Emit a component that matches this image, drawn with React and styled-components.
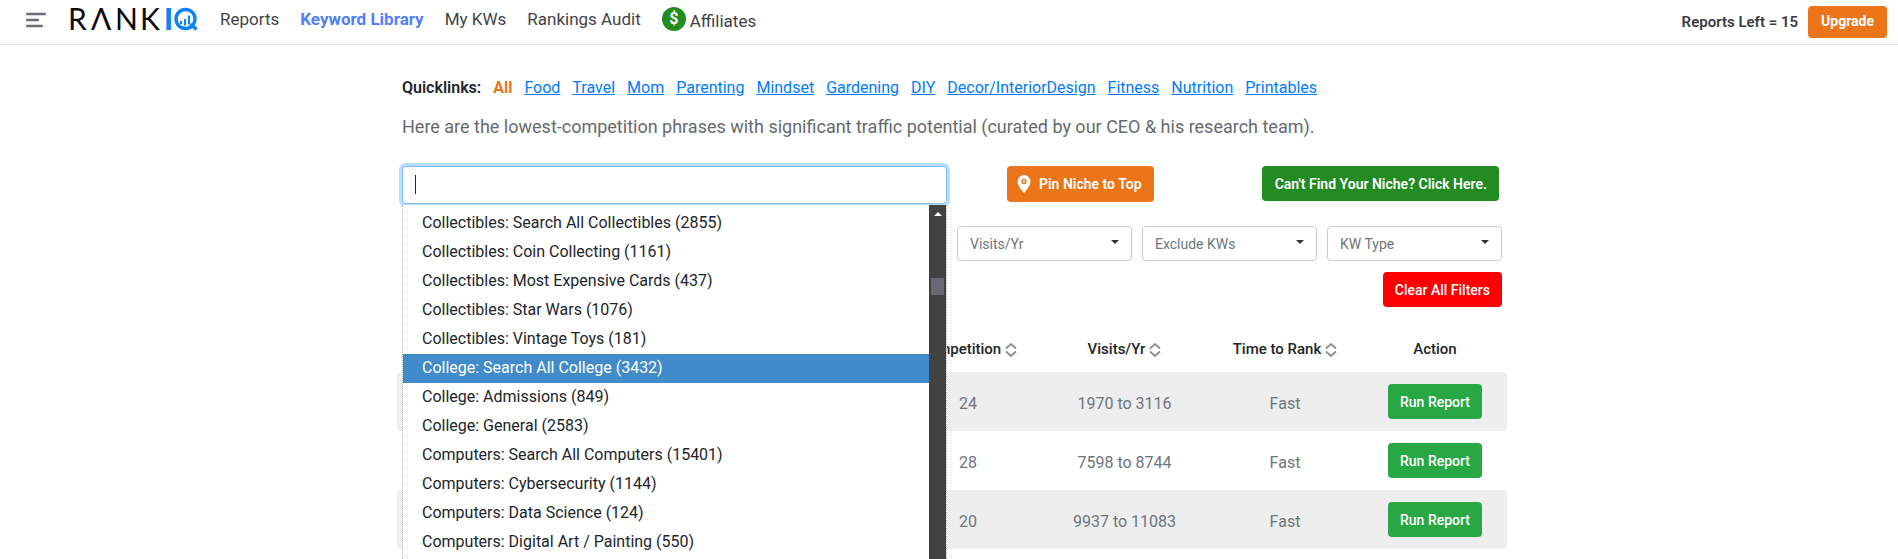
import React from 'react'
import styled, { createGlobalStyle } from 'styled-components'

//Data
const navLinks = [
  { label: 'Reports' },
  { label: 'Keyword Library', active: true },
  { label: 'My KWs' },
  { label: 'Rankings Audit' },
]

const quicklinks = [
  'Food',
  'Travel',
  'Mom',
  'Parenting',
  'Mindset',
  'Gardening',
  'DIY',
  'Decor/InteriorDesign',
  'Fitness',
  'Nutrition',
  'Printables',
]

const niches = [
  'Collectibles: Search All Collectibles (2855)',
  'Collectibles: Coin Collecting (1161)',
  'Collectibles: Most Expensive Cards (437)',
  'Collectibles: Star Wars (1076)',
  'Collectibles: Vintage Toys (181)',
  'College: Search All College (3432)',
  'College: Admissions (849)',
  'College: General (2583)',
  'Computers: Search All Computers (15401)',
  'Computers: Cybersecurity (1144)',
  'Computers: Data Science (124)',
  'Computers: Digital Art / Painting (550)',
]
const activeNiche = 5

const filters = ['Visits/Yr', 'Exclude KWs', 'KW Type']

const rows = [
  { competition: 24, visits: '1970 to 3116', time: 'Fast' },
  { competition: 28, visits: '7598 to 8744', time: 'Fast' },
  { competition: 20, visits: '9937 to 11083', time: 'Fast' },
]

//Icons
const MenuIcon = () => (
  <svg width='20' height='16' viewBox='0 0 20 16' fill='none' stroke='#6e6b7b' strokeWidth='2.4' strokeLinecap='round'>
    <path d='M1.200 2h17.600M1.200 8h10.600M1.200 14h14.600' />
  </svg>
)

const Logo = () => (
  <svg width='134' height='38' viewBox='-4 -7 134 38' role='img' aria-label='RankIQ'>
    <text y='23' x='-2 21 45 70' fontFamily='Lato, sans-serif' fontSize='30' fill='#0b0b0b'>
      RΛNK
    </text>
    <text y='23' x='94' fontFamily='Lato, sans-serif' fontWeight='900' fontSize='30' fill='#0d84f5'>
      I
    </text>
    <circle cx='115.500' cy='12' r='9.500' fill='none' stroke='#0d84f5' strokeWidth='3.400' />
    <path d='M111 17v-3M115 18.500v-6.500M119 17.500v-9' stroke='#0d84f5' strokeWidth='2.200' />
    <path d='M120.500 17l6 5.500' stroke='#0d84f5' strokeWidth='3.500' />
  </svg>
)

const PinIcon = () => (
  <svg width='14' height='18' viewBox='0 0 14 18' aria-hidden='true'>
    <path d='M7 0a6.500 6.500 0 0 0-6.500 6.500C.5 11 7 18 7 18s6.500-7 6.500-11.500A6.500 6.500 0 0 0 7 0z' fill='#fff' />
    <circle cx='7' cy='6.500' r='2' fill='none' stroke='#ec7519' strokeWidth='1.500' />
  </svg>
)

const SortIcon = () => (
  <svg width='12' height='14' viewBox='0 0 12 14' fill='none' stroke='#8f8b8b' strokeWidth='1.700' aria-hidden='true'>
    <path d='M1 5.500l5-4.500 5 4.500M1 8.500l5 4.500 5-4.500' />
  </svg>
)

const CaretIcon = () => (
  <svg width='8' height='4' viewBox='0 0 8 4' aria-hidden='true'>
    <path d='M0 0h8L4 4z' fill='#333' />
  </svg>
)

//Keyword Library page
const App = () => {
  return <>
    <GlobalStyle />
    <Header>
      <MenuButton aria-label='Toggle menu'><MenuIcon /></MenuButton>
      <LogoLink href='#home'><Logo /></LogoLink>
      <Nav>
        {navLinks.map(({ label, active }) => (
          <NavLink key={label} href='#nav' $active={active}>{label}</NavLink>
        ))}
        <AffiliateLink href='#affiliates'>
          <DollarBadge>$</DollarBadge>
          <span>Affiliates</span>
        </AffiliateLink>
      </Nav>
      <ReportsLeft>Reports Left = 15</ReportsLeft>
      <UpgradeButton>Upgrade</UpgradeButton>
    </Header>
    <Main>
      <Content>
        <Quicklinks>
          <strong>Quicklinks:</strong>
          <b>All</b>
          {quicklinks.map((label) => <a key={label} href='#niche'>{label}</a>)}
        </Quicklinks>
        <Intro>
          Here are the lowest-competition phrases with significant traffic potential (curated by our CEO &amp; his research team).
        </Intro>
        <SearchRow>
          <SearchBox>
            <SearchInput type='text' aria-label='Search niches' />
            <TextCursor />
            {/* Niche suggestions */}
            <Suggestions>
              <NicheList role='listbox' aria-label='Niches'>
                {niches.map((label, index) => (
                  <Niche key={label} role='option' aria-selected={index === activeNiche} $active={index === activeNiche}>
                    {label}
                  </Niche>
                ))}
              </NicheList>
              <ScrollTrack>
                <ScrollArrow />
                <ScrollThumb />
              </ScrollTrack>
            </Suggestions>
          </SearchBox>
          <SearchActions>
            <PinButton><PinIcon />Pin Niche to Top</PinButton>
            <NicheButton>Can't Find Your Niche? Click Here.</NicheButton>
          </SearchActions>
        </SearchRow>
        <FilterRow>
          <KeywordInput type='text' aria-label='Keyword' />
          {filters.map((label) => (
            <SelectBox key={label}>
              <select aria-label={label} defaultValue={label}>
                <option>{label}</option>
              </select>
              <CaretIcon />
            </SelectBox>
          ))}
        </FilterRow>
        <ClearRow>
          <ApplyButton aria-label='Apply filters' />
          <ClearButton>Clear All Filters</ClearButton>
        </ClearRow>
      </Content>
      {/* Keywords */}
      <Table>
        <colgroup>
          <col />
          <col width='148' />
          <col width='165' />
          <col width='156' />
          <col width='144' />
        </colgroup>
        <thead>
          <tr>
            <th aria-label='Keyword' />
            <th>Competition<SortIcon /></th>
            <th>Visits/Yr<SortIcon /></th>
            <th>Time to Rank<SortIcon /></th>
            <th>Action</th>
          </tr>
        </thead>
        <tbody>
          {rows.map(({ competition, visits, time }) => (
            <tr key={visits}>
              <td />
              <td>{competition}</td>
              <td>{visits}</td>
              <td>{time}</td>
              <td><RunButton>Run Report</RunButton></td>
            </tr>
          ))}
        </tbody>
      </Table>
    </Main>
  </>
}

//Global style
const GlobalStyle = createGlobalStyle`
  * {
    box-sizing: border-box;
  }
  body {
    min-height: 100vh;
    margin: 0;
    background: #fff;
    color: #212529;
    font-family: Roboto, sans-serif;
    font-size: 16px;
    line-height: 24px;
  }
  button, input, select {
    font-family: inherit;
  }
`

//Header styles
const Header = styled.header`
  display: flex;
  align-items: center;
  height: 45px;
  padding: 0 11px 0 26px;
  border-bottom: 1px solid #dfdfe8;
`

const MenuButton = styled.button`
  display: flex;
  margin-right: 20px;
  padding: 0 0 4px;
  border: 0;
  background: none;
`

const LogoLink = styled.a`
  display: flex;
  margin: 0 20px 6px 0;
`

const Nav = styled.nav`
  display: flex;
  align-items: center;
  gap: 21px;
  margin-right: auto;
  padding-bottom: 6px;
`

const NavLink = styled.a`
  color: ${({ $active }) => ($active ? '#4f80f7' : '#3f4347')};
  font-size: 17px;
  font-weight: ${({ $active }) => ($active ? 700 : 400)};
  text-decoration: none;
`

const AffiliateLink = styled(NavLink)`
  display: flex;
  align-items: center;
  gap: 4px;
  span:last-child {
    padding-top: 4px;
  }
`

const DollarBadge = styled.span`
  width: 24px;
  height: 24px;
  border-radius: 50%;
  background: #228b22;
  color: #fff;
  font-size: 16px;
  font-weight: 700;
  text-align: center;
`

const ReportsLeft = styled.span`
  margin-right: 10px;
  font-size: 15px;
  font-weight: 600;
  color: #3a3d42;
`

//Buttons
const Button = styled.button`
  display: inline-flex;
  align-items: center;
  justify-content: center;
  height: 35px;
  padding: 0 12px;
  border: 0;
  border-radius: 4px;
  color: #fff;
  font-size: 14px;
  line-height: 20px;
  font-weight: 500;
`

const UpgradeButton = styled(Button)`
  height: 32px;
  padding: 0 13px 2px;
  background: #ec7519;
  font-weight: 700;
`

const PinButton = styled(Button)`
  gap: 8px;
  height: 36px;
  padding: 0 12px 0 10px;
  background: #ec7519;
  font-weight: 600;
`

const NicheButton = styled(Button)`
  padding: 0 12px 0 13px;
  background: #228b22;
  font-weight: 600;
`

const ClearButton = styled(Button)`
  background: #ff0000;
`

const ApplyButton = styled(Button)`
  width: 120px;
  height: 31px;
  background: #007bff;
`

const RunButton = styled(Button)`
  background: #28a745;
`

//Page styles
const Main = styled.main`
  width: 100%;
  max-width: 1116px;
  margin: 0 auto;
  padding-left: 6px;
`

const Content = styled.div`
  padding: 31px 5px 0;
`

const Quicklinks = styled.nav`
  display: flex;
  gap: 12px;
  strong {
    font-weight: 600;
  }
  b {
    color: #ec7519;
  }
  a {
    color: #007bff;
    text-decoration: underline;
  }
`

const Intro = styled.p`
  margin: 15px 0 27px;
  color: #666a6e;
  font-size: 18px;
`

const SearchRow = styled.div`
  display: flex;
  align-items: flex-start;
`

const SearchBox = styled.div`
  position: relative;
  width: 545px;
`

const SearchInput = styled.input`
  display: block;
  width: 100%;
  height: 38px;
  padding: 6px 12px;
  border: 1px solid #80bdff;
  border-radius: 4px;
  outline: 0;
  box-shadow: 0 0 0 3px #b8dfff;
  font-size: 16px;
`

const TextCursor = styled.span`
  position: absolute;
  top: 9px;
  left: 13px;
  width: 1px;
  height: 19px;
  background: #222;
`

const Suggestions = styled.div`
  position: absolute;
  z-index: 2;
  top: 39px;
  left: 0;
  display: flex;
  width: 100%;
  height: calc(100vh - 205px);
  border: 1px dotted #b8b8b8;
  border-width: 0 1px;
  background: #fff;
`

const NicheList = styled.ul`
  flex: 1;
  margin: 0;
  padding: 4px 0 0;
  list-style: none;
`

const Niche = styled.li`
  padding: 0 19px 2px;
  line-height: 27px;
  background: ${({ $active }) => ($active ? '#428bca' : 'transparent')};
  color: ${({ $active }) => ($active ? '#fff' : '#212529')};
`

const ScrollTrack = styled.div`
  display: flex;
  flex-direction: column;
  align-items: center;
  width: 17px;
  background: #424242;
`

const ScrollArrow = styled.span`
  margin: 7px 0 62px;
  border: 4px solid transparent;
  border-top: 0;
  border-bottom-color: #fff;
`

const ScrollThumb = styled.span`
  width: 13px;
  height: 17px;
  background: #686872;
`

const SearchActions = styled.div`
  flex: 1;
  display: flex;
  align-items: flex-start;
  justify-content: space-between;
  padding: 0 3px 0 60px;
`

const FilterRow = styled.div`
  display: flex;
  align-items: center;
  gap: 10px;
  margin-top: 22px;
`

const KeywordInput = styled.input`
  flex: 1;
  height: 31px;
  border: 1px solid #c2a98f;
`

const SelectBox = styled.span`
  position: relative;
  display: flex;
  width: 175px;
  select {
    appearance: none;
    width: 100%;
    height: 35px;
    padding: 0 12px;
    border: 1px solid #c9cbcd;
    border-radius: 4px;
    background: #fff;
    color: #6c757d;
    font-size: 14px;
  }
  svg {
    position: absolute;
    top: 14px;
    right: 13px;
    pointer-events: none;
  }
`

const ClearRow = styled.div`
  display: flex;
  align-items: center;
  justify-content: space-between;
  margin-top: 11px;
`

//Table styles
const Table = styled.table`
  width: 100%;
  margin-top: 19px;
  border-spacing: 0;
  table-layout: fixed;
  text-align: center;
  th {
    height: 46px;
    padding: 0;
    font-size: 15px;
    font-weight: 500;
    white-space: nowrap;
  }
  th svg {
    margin-left: 4px;
    vertical-align: -3px;
  }
  td {
    height: 59px;
    padding: 4px 0 0;
    color: #6c757d;
  }
  tbody tr:nth-child(odd) td {
    background: #eee;
  }
  td:first-child {
    border-radius: 4px 0 0 4px;
  }
  td:last-child {
    padding: 0;
    border-radius: 0 4px 4px 0;
  }
`

export default App
